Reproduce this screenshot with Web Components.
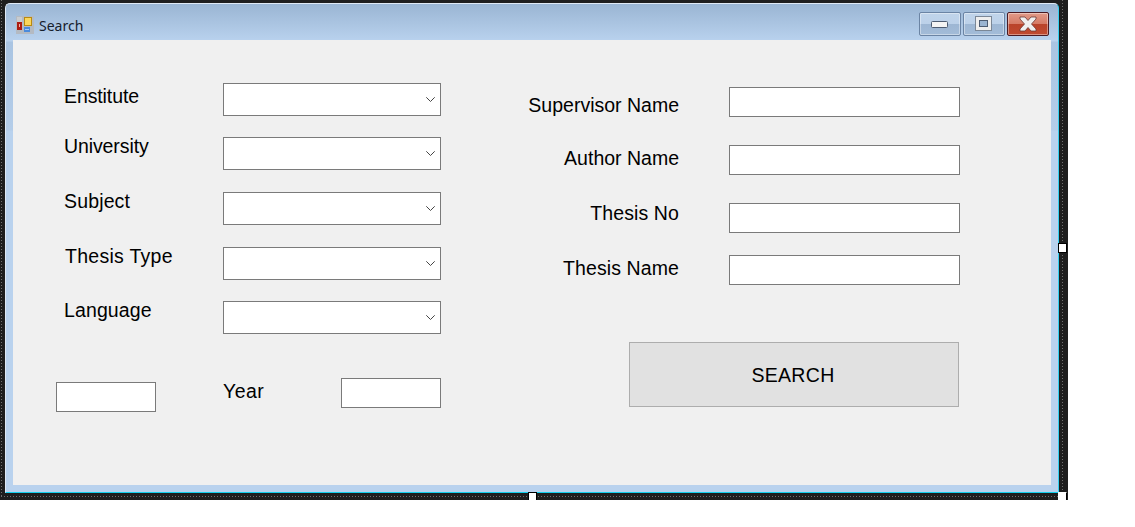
<!DOCTYPE html>
<html>
<head>
<meta charset="utf-8">
<title>Search</title>
<style>
  html, body { margin: 0; background: #fff; }
  body { font-family: "Liberation Sans", Arial, sans-serif; }
</style>
</head>
<body>

<designer-frame>
  <app-window caption="Search">
    <form-column slot="left" top="43" inset="43">
      <form-row gap="0" indent="8"><form-label shift="1" width="159" spread="-.1">Enstitute</form-label><combo-box></combo-box></form-row>
      <form-row gap="21" indent="8"><form-label shift="-3" width="159" spread="-.1">University</form-label><combo-box></combo-box></form-row>
      <form-row gap="22" indent="8"><form-label shift="-3" width="159" spread=".15">Subject</form-label><combo-box></combo-box></form-row>
      <form-row gap="22" indent="9"><form-label shift="-3" width="158" spread=".27">Thesis Type</form-label><combo-box></combo-box></form-row>
      <form-row gap="21" indent="8"><form-label shift="-3" width="159" spread=".12">Language</form-label><combo-box></combo-box></form-row>
      <form-row gap="44" indent="0">
        <text-box width="100" drop="4"></text-box>
        <form-label shift="1" width="118" indent="67" spread=".45">Year</form-label>
        <text-box width="100"></text-box>
      </form-row>
    </form-column>
    <form-column slot="right" top="47" inset="38">
      <form-row gap="0"><form-label shift="6" width="200" align="right">Supervisor Name</form-label><text-box width="231" indent="50"></text-box></form-row>
      <form-row gap="28"><form-label shift="1" width="200" align="right">Author Name</form-label><text-box width="231" indent="50"></text-box></form-row>
      <form-row gap="28"><form-label shift="-2" width="200" align="right" spread=".1">Thesis No</form-label><text-box width="231" indent="50"></text-box></form-row>
      <form-row gap="22"><form-label shift="1" width="200" align="right" spread=".1">Thesis Name</form-label><text-box width="231" indent="50"></text-box></form-row>
      <form-row gap="57" indent="150"><push-button>SEARCH</push-button></form-row>
    </form-column>
  </app-window>
</designer-frame>

<script>
// dark designer surface round the form, with the dotted selection line and grab handles
class DesignerFrame extends HTMLElement {
  connectedCallback() {
    const shadow = this.attachShadow({ mode: "open" });
    shadow.innerHTML = `
      <style>
        :host {
          display: block;
          position: relative;
          width: 1068px;
          height: 500px;
          background: #1e1e1e;
          box-sizing: border-box;
          padding: 3px 9px 7px 5px;
        }
        .dots { position: absolute; }
        .v { width: 1px; top: 0; bottom: 3px;
          background: repeating-linear-gradient(#6f6f6f 0 1px, transparent 1px 3px); }
        .h { height: 1px; left: 1px; right: 6px; bottom: 3px;
          background: repeating-linear-gradient(90deg, #6f6f6f 0 1px, transparent 1px 3px); }
        .handle { position: absolute; width: 7px; height: 7px; background: #fff; border: 1px solid #000; }
      </style>
      <slot></slot>
      <div class="dots v" style="left:1px"></div>
      <div class="dots v" style="left:1062px"></div>
      <div class="dots h"></div>
      <div class="handle" style="left:528px;bottom:-1px"></div>
      <div class="handle" style="left:1058px;top:243px;height:8px"></div>
      <div class="handle" style="left:1058px;bottom:-1px;border-top-color:transparent;border-left-color:transparent"></div>
    `;
  }
}

class AppWindow extends HTMLElement {
  connectedCallback() {
    const shadow = this.attachShadow({ mode: "open" });
    shadow.innerHTML = `
      <style>
        :host {
          display: flex;
          flex-direction: column;
          height: 100%;
          box-sizing: border-box;
          border: 1px solid #dfe9f5;
          border-right-color: #35d0f0;
          border-bottom-color: #12d0ee;
          border-radius: 5px 5px 0 0;
          background: linear-gradient(#9ab5d3 0, #b9d2ee 37px, #a9c4e2 38px, #b4cde9 126px, #b9d2ee 127px);
          color: #000;
        }
        .title {
          display: flex;
          align-items: center;
          height: 36px;
          flex: none;
          padding: 0 9px 0 10px;
        }
        .title svg { flex: none; margin: 6px 5px 0 0; }
        .caption {
          font: 14px "Noto Sans", "Open Sans", sans-serif;
          color: #16202c;
          margin-top: 7px;
          flex: 1;
        }
        .client {
          flex: 1;
          display: flex;
          margin: 0 7px 7px 7px;
          background: #f0f0f0;
          min-height: 0;
        }
      </style>
      <div class="title">
        <svg width="18" height="18" viewBox="0 0 18 18">
          <rect width="18" height="18" fill="#b4bac2"/>
          <rect x="1" y="1" width="5" height="5" fill="#c9ccd0"/>
          <rect x="1" y="6" width="5" height="8" fill="#ad1c12"/>
          <rect x="3" y="8" width="1" height="3" fill="#f1b0a8"/>
          <rect x="8" y="1" width="8" height="9" fill="#b98a10"/>
          <rect x="9" y="2" width="6" height="7" fill="#fbd65a"/>
          <rect x="8" y="11" width="6" height="5" fill="#4b8bdc"/>
          <rect x="9" y="13" width="4" height="1" fill="#a9ccf2"/>
        </svg>
        <span class="caption">${this.getAttribute("caption") || ""}</span>
        <window-controls></window-controls>
      </div>
      <div class="client">
        <slot name="left"></slot>
        <slot name="right"></slot>
      </div>
    `;
  }
}

// the three Aero caption buttons
class WindowControls extends HTMLElement {
  connectedCallback() {
    const shadow = this.attachShadow({ mode: "open" });
    shadow.innerHTML = `
      <style>
        :host { display: flex; gap: 2px; margin-top: 3px; }
        .btn {
          width: 42px;
          height: 24px;
          box-sizing: border-box;
          border: 1px solid #6b84a4;
          border-radius: 2px;
          box-shadow: inset 0 0 0 1px rgba(255,255,255,.4);
          background: linear-gradient(#c0d4ea 0, #bcd1e9 50%, #9db6d3 50%, #a3bcd8 100%);
          display: flex;
          align-items: center;
          justify-content: center;
        }
        .close {
          border-color: #4a1a22;
          background: linear-gradient(#e29a88 0, #d57a65 50%, #b9432a 50%, #c04a30 100%);
        }
        svg { display: block; }
      </style>
      <div class="btn">
        <svg width="18" height="8" viewBox="0 0 18 8" style="margin-top:2px">
          <rect x=".5" y=".5" width="16" height="6" rx="1" fill="#f4f4f4" stroke="#4d5c72"/>
        </svg>
      </div>
      <div class="btn">
        <svg width="18" height="16" viewBox="0 0 18 16">
          <rect x=".5" y=".5" width="16" height="14" fill="#eeeeee" stroke="#7b8796"/>
          <rect x="4.5" y="4.5" width="8" height="6" fill="#9ab4d1" stroke="#4d5c72"/>
        </svg>
      </div>
      <div class="btn close">
        <svg width="18" height="16" viewBox="0 0 18 16">
          <path d="M1 1H6L9 4.5L12 1H17V3L12.5 8L17 13V15H12L9 11.5L6 15H1V13L5.5 8L1 3Z" fill="#f0f0f0" stroke="#6d3a36" stroke-width=".8"/>
        </svg>
      </div>
    `;
  }
}

class FormColumn extends HTMLElement {
  connectedCallback() {
    const shadow = this.attachShadow({ mode: "open" });
    shadow.innerHTML = `
      <style>
        :host {
          display: flex;
          flex-direction: column;
          padding-top: ${this.getAttribute("top") || 0}px;
          padding-left: ${this.getAttribute("inset") || 0}px;
        }
      </style>
      <slot></slot>
    `;
  }
}

class FormRow extends HTMLElement {
  connectedCallback() {
    const shadow = this.attachShadow({ mode: "open" });
    shadow.innerHTML = `
      <style>
        :host {
          display: flex;
          align-items: flex-start;
          margin-top: ${this.getAttribute("gap") || 0}px;
          padding-left: ${this.getAttribute("indent") || 0}px;
        }
      </style>
      <slot></slot>
    `;
  }
}

class FormLabel extends HTMLElement {
  connectedCallback() {
    const shadow = this.attachShadow({ mode: "open" });
    shadow.innerHTML = `
      <style>
        :host {
          display: block;
          flex: none;
          box-sizing: content-box;
          width: ${this.getAttribute("width") || 100}px;
          height: 24px;
          margin-top: ${this.getAttribute("shift") || 0}px;
          margin-left: ${this.getAttribute("indent") || 0}px;
          text-align: ${this.getAttribute("align") || "left"};
          letter-spacing: ${this.getAttribute("spread") || 0}px;
          font: 19.5px/24px "Liberation Sans", Arial, sans-serif;
          color: #000;
          white-space: nowrap;
        }
      </style>
      <slot></slot>
    `;
  }
}

class ComboBox extends HTMLElement {
  connectedCallback() {
    const shadow = this.attachShadow({ mode: "open" });
    shadow.innerHTML = `
      <style>
        :host {
          display: flex;
          align-items: center;
          justify-content: flex-end;
          flex: none;
          width: 218px;
          height: 33px;
          box-sizing: border-box;
          background: #fff;
          border: 1px solid #7a7a7a;
          padding-right: 5px;
        }
      </style>
      <svg width="9" height="5" viewBox="0 0 9 5" fill="none" stroke="#444" stroke-width="1">
        <path d="M.3 .3L4.5 4.5L8.7 .3"/>
      </svg>
    `;
  }
}

class TextBox extends HTMLElement {
  connectedCallback() {
    const shadow = this.attachShadow({ mode: "open" });
    shadow.innerHTML = `
      <style>
        :host {
          display: block;
          flex: none;
          width: ${this.getAttribute("width") || 100}px;
          height: 30px;
          box-sizing: border-box;
          margin-top: ${this.getAttribute("drop") || 0}px;
          margin-left: ${this.getAttribute("indent") || 0}px;
          background: #fff;
          border: 1px solid #7a7a7a;
        }
      </style>
    `;
  }
}

class PushButton extends HTMLElement {
  connectedCallback() {
    const shadow = this.attachShadow({ mode: "open" });
    shadow.innerHTML = `
      <style>
        :host {
          display: flex;
          align-items: center;
          justify-content: center;
          width: 330px;
          height: 65px;
          box-sizing: border-box;
          padding: 1px 2px 0 0;
          background: #e1e1e1;
          border: 1px solid #adadad;
          font: 19.5px "Liberation Sans", Arial, sans-serif;
          letter-spacing: .3px;
          color: #000;
        }
      </style>
      <slot></slot>
    `;
  }
}

customElements.define("designer-frame", DesignerFrame);
customElements.define("app-window", AppWindow);
customElements.define("window-controls", WindowControls);
customElements.define("form-column", FormColumn);
customElements.define("form-row", FormRow);
customElements.define("form-label", FormLabel);
customElements.define("combo-box", ComboBox);
customElements.define("text-box", TextBox);
customElements.define("push-button", PushButton);
</script>
</body>
</html>
